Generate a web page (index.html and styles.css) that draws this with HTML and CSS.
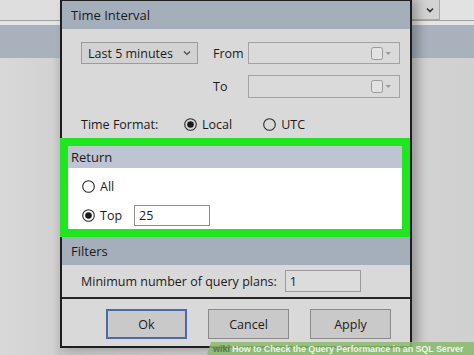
FILE: index.html
```html
<!DOCTYPE html>
<html>
<head>
<meta charset="utf-8">
<link rel="stylesheet" href="styles.css">
</head>
<body>
<div class="screen">
  <div class="backdrop">
    <div class="bd-top">
      <div class="bd-spacer"></div>
      <div class="bd-btn">
        <svg width="8" height="6" viewBox="0 0 8 6"><path d="M1 1.5 L4 4.5 L7 1.5" fill="none" stroke="#333" stroke-width="1.6"/></svg>
      </div>
      <div class="bd-fill"></div>
    </div>
    <div class="bd-line"></div>
    <div class="bd-gap"></div>
    <div class="bd-band"></div>
    <div class="bd-rest"></div>
  </div>

  <div class="dialog">
    <div class="hdr">Time Interval</div>
    <div class="sec-time">
      <div class="grid">
        <div class="select">
          <span>Last 5 minutes</span>
          <svg width="8" height="6" viewBox="0 0 8 6"><path d="M1 1.5 L4 4.5 L7 1.5" fill="none" stroke="#444" stroke-width="1.2"/></svg>
        </div>
        <div class="lbl">From</div>
        <div class="datebox">
          <svg width="21" height="13" viewBox="0 0 21 13"><rect x="0.5" y="0.5" width="11" height="12" rx="2" fill="#e2e2e2" stroke="#9a9a9a"/><path d="M14.5 5 L20 5 L17.25 8 Z" fill="#9a9a9a"/></svg>
        </div>
        <div></div>
        <div class="lbl">To</div>
        <div class="datebox">
          <svg width="21" height="13" viewBox="0 0 21 13"><rect x="0.5" y="0.5" width="11" height="12" rx="2" fill="#e2e2e2" stroke="#9a9a9a"/><path d="M14.5 5 L20 5 L17.25 8 Z" fill="#9a9a9a"/></svg>
        </div>
      </div>
      <div class="fmt-row">
        <span class="fmt-lbl">Time Format:</span>
        <span class="radio-item">
          <svg class="radio" width="13" height="13" viewBox="0 0 13 13"><circle cx="6.5" cy="6.5" r="5.8" fill="none" stroke="#2a2a2a" stroke-width="1.1"/><circle cx="6.5" cy="6.5" r="3.3" fill="#1a1a1a"/></svg>
          <span>Local</span>
        </span>
        <span class="radio-item utc">
          <svg class="radio" width="13" height="13" viewBox="0 0 13 13"><circle cx="6.5" cy="6.5" r="5.8" fill="none" stroke="#2a2a2a" stroke-width="1.1"/></svg>
          <span>UTC</span>
        </span>
      </div>
    </div>

    <div class="highlight">
      <div class="hdr-ret">Return</div>
      <div class="ret-body">
        <div class="ret-row">
          <svg class="radio" width="13" height="13" viewBox="0 0 13 13"><circle cx="6.5" cy="6.5" r="5.8" fill="#fff" stroke="#2a2a2a" stroke-width="1.1"/></svg>
          <span class="ret-lbl">All</span>
        </div>
        <div class="ret-row">
          <svg class="radio" width="13" height="13" viewBox="0 0 13 13"><circle cx="6.5" cy="6.5" r="5.8" fill="#fff" stroke="#2a2a2a" stroke-width="1.1"/><circle cx="6.5" cy="6.5" r="3.3" fill="#1a1a1a"/></svg>
          <span class="ret-lbl top">Top</span>
          <div class="input top-input">25</div>
        </div>
      </div>
    </div>

    <div class="hdr">Filters</div>
    <div class="min-row">
      <span>Minimum number of query plans:</span>
      <div class="input min-input">1</div>
    </div>
    <div class="sep"></div>
    <div class="btn-row">
      <div class="btn ok">Ok</div>
      <div class="btn">Cancel</div>
      <div class="btn">Apply</div>
    </div>
  </div>

  <div class="watermark"><span class="wiki">wiki</span><span class="wm-text">How to Check the Query Performance in an SQL Server</span></div>
</div>
</body>
</html>
```

FILE: styles.css
```css
* { box-sizing: border-box; }
html, body { margin: 0; padding: 0; }
body {
  width: 474px;
  height: 355px;
  overflow: hidden;
  font-family: "Open Sans", "Noto Sans", sans-serif;
  color: #1b1b1b;
}
.screen {
  position: relative;
  width: 474px;
  height: 355px;
  overflow: hidden;
  background: #d5d5d5;
}
.backdrop {
  display: flex;
  flex-direction: column;
  height: 100%;
}
.bd-top {
  display: flex;
  height: 20px;
  background: #dedede;
}
.bd-spacer { width: 405px; }
.bd-btn {
  width: 35px;
  height: 20px;
  background: #d3d3d3;
  border-right: 1px solid #a8a8a8;
  border-bottom: 1px solid #a8a8a8;
  display: flex;
  align-items: center;
  justify-content: flex-end;
  padding-right: 5px;
}
.bd-fill { flex: 1; background: #e2e2e2; }
.bd-line { height: 1px; background: #a0a0a0; }
.bd-gap { height: 4px; background: #e4e4e4; }
.bd-band { height: 33px; background: #a9b1bc; }
.bd-rest {
  flex: 1;
  background: linear-gradient(90deg, #d8d8d8 0, #d2d2d2 52px, #c4c4c4 60px, #d2d2d2 420px, #d0d0d0 474px);
}

.dialog {
  position: absolute;
  left: 60px;
  top: -1px;
  width: 352px;
  height: 349px;
  border: 2px solid #1e1e1e;
  background: #d9d9d9;
  display: flex;
  flex-direction: column;
  box-shadow: 6px 0 10px rgba(0,0,0,0.28);
  font-size: 12.5px;
}
.hdr {
  height: 28px;
  background: #a5aebb;
  padding-left: 9px;
  display: flex;
  align-items: center;
  font-size: 13px;
}

.sec-time {
  padding: 13px 0 0 19px;
  height: 109px;
}
.grid {
  display: grid;
  grid-template-columns: 117px 50px 152px;
  grid-template-rows: 22px 23px;
  row-gap: 11px;
  align-items: center;
}
.select {
  height: 22px;
  border: 1px solid #9b9b9b;
  background: #d2d2d2;
  display: flex;
  align-items: center;
  justify-content: space-between;
  padding: 0 6px 0 6px;
}
.lbl { padding-left: 15px; }
.datebox {
  height: 100%;
  border: 1px solid #a2a2a2;
  background: #dadada;
  display: flex;
  align-items: center;
  justify-content: flex-end;
  padding-right: 7px;
}
.fmt-row {
  display: flex;
  align-items: center;
  margin-top: 18px;
  height: 16px;
}
.fmt-lbl { width: 103px; }
.radio-item {
  display: flex;
  align-items: center;
  gap: 5px;
}
.radio { display: block; flex: none; }
.utc { margin-left: 31px; }

.highlight {
  margin-left: -2px;
  height: 99px;
  border: 8px solid #1fe61f;
  display: flex;
  flex-direction: column;
}
.hdr-ret {
  height: 22px;
  background: #bec4d2;
  padding-left: 3px;
  display: flex;
  align-items: center;
  font-size: 13px;
}
.ret-body {
  flex: 1;
  background: #ffffff;
  padding: 8px 0 0 14px;
  display: flex;
  flex-direction: column;
  gap: 9px;
}
.ret-row {
  display: flex;
  align-items: center;
  height: 20px;
}
.ret-lbl { margin-left: 5px; }
.ret-lbl.top { width: 34px; }
.input {
  border: 1px solid #8e8e8e;
  background: #ffffff;
  display: flex;
  align-items: center;
  padding-left: 4px;
}
.top-input {
  width: 76px;
  height: 21px;
}

.min-row {
  height: 32px;
  display: flex;
  align-items: center;
  padding-left: 19px;
  gap: 8px;
}
.min-input {
  width: 76px;
  height: 22px;
  background: #dcdcdc;
  border-color: #9a9a9a;
}
.sep { height: 2px; background: #262626; }
.btn-row {
  flex: 1;
  display: flex;
  padding: 10px 0 0 44px;
  gap: 21px;
}
.btn {
  width: 81px;
  height: 30px;
  border: 1px solid #8a8a8a;
  background: #c9c9c9;
  display: flex;
  align-items: center;
  justify-content: center;
}
.btn.ok { border: 2px solid #4c6aa8; }

.watermark {
  position: absolute;
  left: 207px;
  top: 342px;
  width: 267px;
  height: 13px;
  background: rgba(138, 184, 108, 0.85);
  clip-path: polygon(4px 0, 100% 0, 100% 100%, 0 100%);
  display: flex;
  align-items: center;
  padding-left: 6px;
  font-family: "Liberation Sans", Arial, sans-serif;
  font-weight: bold;
  font-size: 9px;
  white-space: nowrap;
}
.wiki { color: #5b7447; margin-right: 2px; }
.wm-text { color: rgba(255,255,255,0.85); letter-spacing: -0.1px; }
```
